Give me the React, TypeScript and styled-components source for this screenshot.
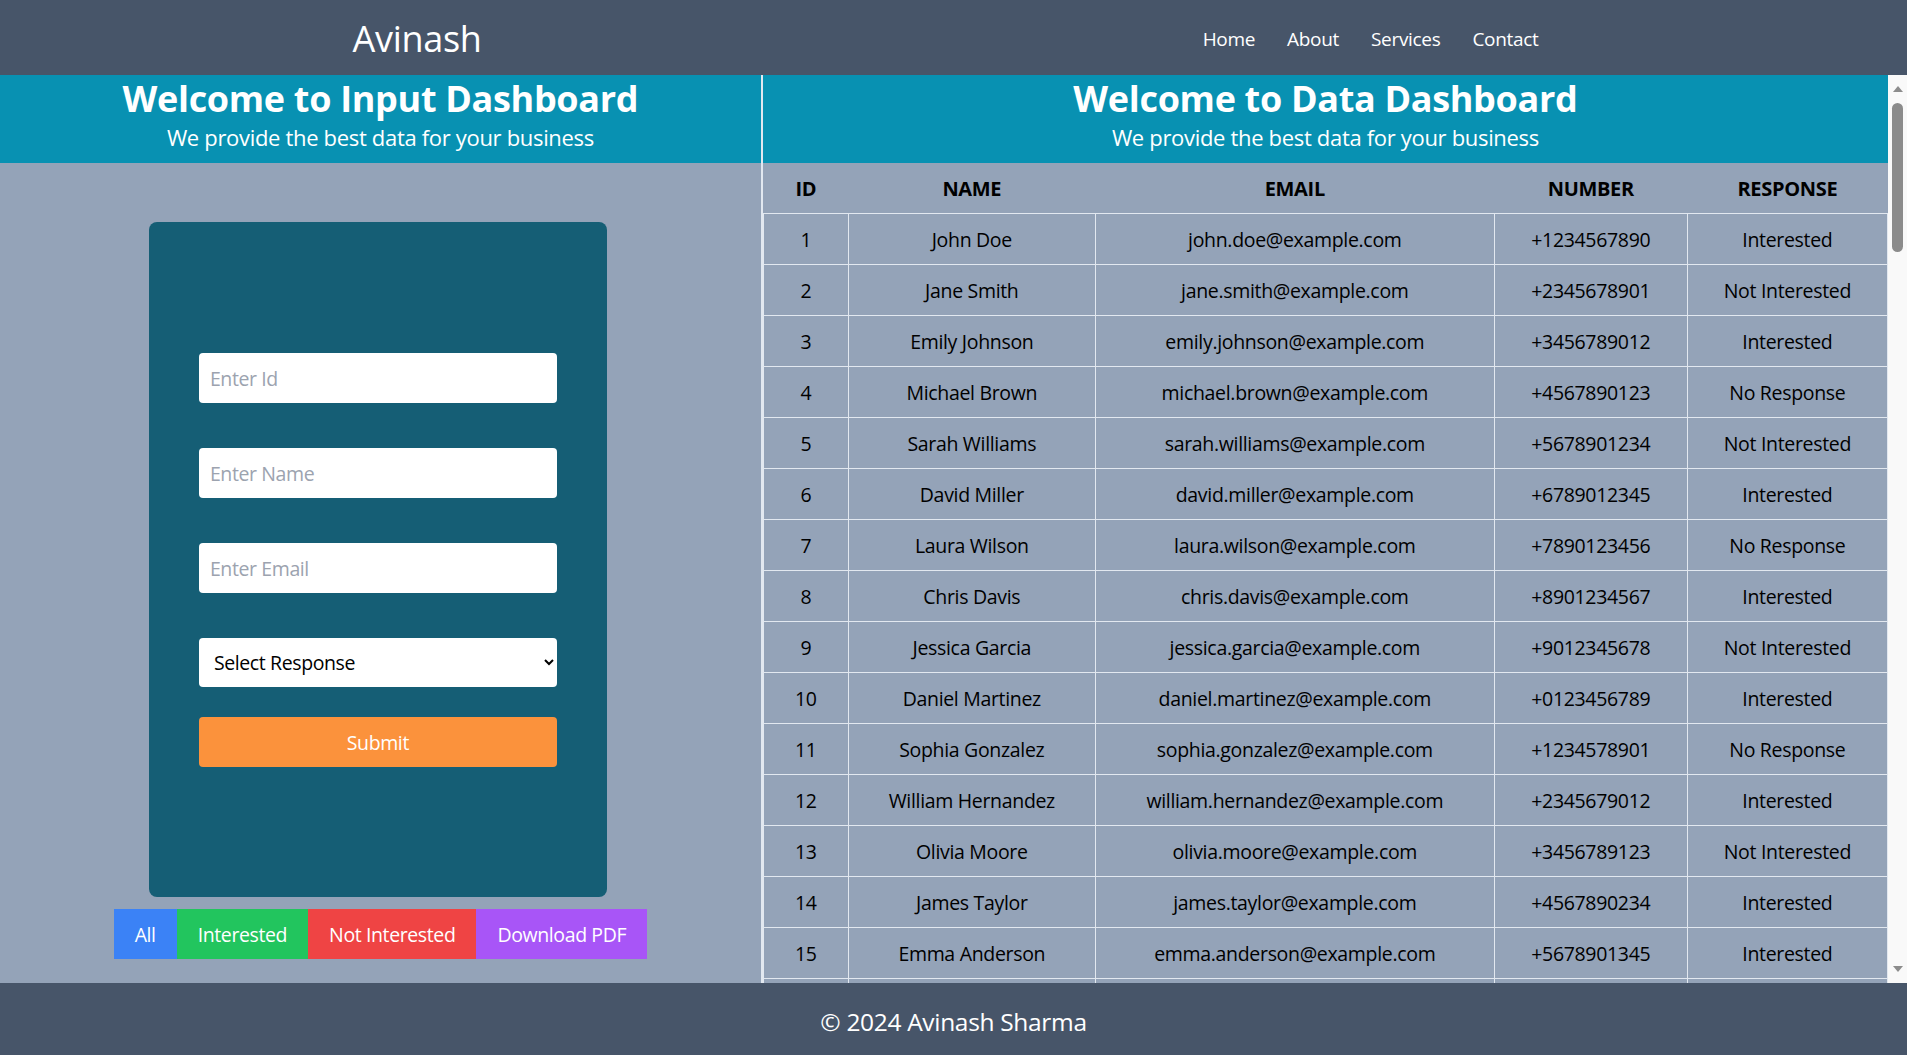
import React from "react";
import styled, { createGlobalStyle } from "styled-components";

const GlobalStyle = createGlobalStyle`
  *, *::before, *::after { box-sizing: border-box; }
  html, body { margin: 0; padding: 0; height: 100%; overflow: hidden; }
  body {
    font-family: "Open Sans", "Noto Sans", "Liberation Sans", sans-serif;
    letter-spacing: -0.02em;
  }
  #root { height: 100%; }
`;

const Page = styled.div`
  display: flex;
  flex-direction: column;
  height: 100vh;
`;

const TopBar = styled.header`
  flex: 0 0 75px;
  display: flex;
  align-items: center;
  justify-content: space-around;
  padding-top: 2px;
  background: #475569;
  color: #ffffff;
`;

const Brand = styled.div`
  font-size: 36px;
  line-height: 40px;
`;

const Nav = styled.nav`
  display: flex;
  align-items: center;
`;

const NavLink = styled.a`
  margin: 0 16px;
  font-size: 19px;
  line-height: 28px;
  color: #ffffff;
  text-decoration: none;
`;

const Main = styled.main`
  flex: 1;
  display: flex;
  min-height: 0;
`;

const LeftPanel = styled.section`
  flex: 0 0 40%;
  display: flex;
  flex-direction: column;
  background: #94a3b8;
  border-right: 2px solid #e2e8f0;
`;

const RightPanel = styled.section`
  flex: 1;
  min-width: 0;
  display: flex;
  background: #94a3b8;
`;

const ScrollArea = styled.div`
  flex: 1;
  min-width: 0;
  overflow-y: auto;
  scrollbar-width: none;

  &::-webkit-scrollbar {
    display: none;
  }
`;

const ScrollTrack = styled.div`
  flex: 0 0 19px;
  display: flex;
  flex-direction: column;
  align-items: center;
  padding: 11px 0 11px;
  background: #f9f9f9;
`;

const ArrowUp = styled.div`
  width: 0;
  height: 0;
  border-left: 5px solid transparent;
  border-right: 5px solid transparent;
  border-bottom: 6px solid #8c8c8c;
`;

const ArrowDown = styled.div`
  width: 0;
  height: 0;
  border-left: 5px solid transparent;
  border-right: 5px solid transparent;
  border-top: 6px solid #8c8c8c;
`;

const Thumb = styled.div`
  width: 11px;
  height: 149px;
  margin-top: 11px;
  border-radius: 6px;
  background: #8b8b8b;
`;

const TrackSpacer = styled.div`
  flex: 1;
`;

const Banner = styled.div`
  flex: 0 0 88px;
  height: 88px;
  display: flex;
  flex-direction: column;
  align-items: center;
  padding-top: 4px;
  background: #0891b2;
  color: #ffffff;
  text-align: center;
`;

const BannerTitle = styled.h1`
  margin: 0;
  font-size: 36px;
  line-height: 40px;
  font-weight: 700;
`;

const BannerSub = styled.p`
  margin: 4px 0 0;
  font-size: 22px;
  line-height: 28px;
`;

const LeftBody = styled.div`
  flex: 1;
  display: flex;
  flex-direction: column;
  align-items: center;
  padding-top: 59px;
`;

const FormCard = styled.form`
  width: 458px;
  height: 675px;
  display: flex;
  flex-direction: column;
  margin-right: 5px;
  padding: 131px 50px 0;
  background: #155e75;
  border-radius: 8px;
`;

const TextField = styled.input`
  height: 50px;
  margin-bottom: 45px;
  padding: 0 11px;
  border: none;
  border-radius: 4px;
  background: #ffffff;
  font-family: inherit;
  font-size: 19.5px;
  letter-spacing: -0.02em;
  color: #000;
  outline: none;

  &::placeholder {
    color: #9ca3af;
  }
`;

const ResponseSelect = styled.select`
  height: 49px;
  margin-bottom: 30px;
  padding: 0 8px 0 11px;
  border: none;
  border-radius: 4px;
  background: #ffffff;
  font-family: inherit;
  font-size: 19.5px;
  letter-spacing: -0.02em;
  color: #000;
  outline: none;
`;

const SubmitButton = styled.button`
  height: 50px;
  border: none;
  border-radius: 4px;
  background: #fb923c;
  color: #ffffff;
  font-family: inherit;
  font-size: 19.5px;
  letter-spacing: -0.02em;
  cursor: pointer;
`;

const FilterBar = styled.div`
  display: flex;
  margin-top: 12px;
`;

const FilterButton = styled.button<{ $bg: string }>`
  height: 50px;
  padding: 0 21px;
  border: none;
  border-radius: 0;
  background: ${(p) => p.$bg};
  color: #ffffff;
  font-family: inherit;
  font-size: 19.5px;
  letter-spacing: -0.02em;
  cursor: pointer;
`;

const DataTable = styled.table`
  width: 100%;
  border-collapse: collapse;
  table-layout: fixed;
  color: #000;
`;

const HeadCell = styled.th`
  height: 50px;
  padding: 2px 0 0;
  font-size: 20px;
  font-weight: 700;
  text-transform: uppercase;
  text-align: center;
  border-bottom: 1px solid #e2e8f0;
`;

const Cell = styled.td`
  height: 51px;
  padding: 1px 0 0;
  font-size: 19.5px;
  text-align: center;
  border: 1px solid #e2e8f0;
  white-space: nowrap;
`;

const Footer = styled.footer`
  flex: 0 0 72px;
  display: flex;
  align-items: center;
  justify-content: center;
  padding-top: 6px;
  background: #475569;
  color: #ffffff;
  font-size: 24.5px;
  line-height: 32px;
`;

type Row = { id: number; name: string; email: string; number: string; response: string };

const base: Row[] = [
  { id: 1, name: "John Doe", email: "john.doe@example.com", number: "+1234567890", response: "Interested" },
  { id: 2, name: "Jane Smith", email: "jane.smith@example.com", number: "+2345678901", response: "Not Interested" },
  { id: 3, name: "Emily Johnson", email: "emily.johnson@example.com", number: "+3456789012", response: "Interested" },
  { id: 4, name: "Michael Brown", email: "michael.brown@example.com", number: "+4567890123", response: "No Response" },
  { id: 5, name: "Sarah Williams", email: "sarah.williams@example.com", number: "+5678901234", response: "Not Interested" },
  { id: 6, name: "David Miller", email: "david.miller@example.com", number: "+6789012345", response: "Interested" },
  { id: 7, name: "Laura Wilson", email: "laura.wilson@example.com", number: "+7890123456", response: "No Response" },
  { id: 8, name: "Chris Davis", email: "chris.davis@example.com", number: "+8901234567", response: "Interested" },
  { id: 9, name: "Jessica Garcia", email: "jessica.garcia@example.com", number: "+9012345678", response: "Not Interested" },
  { id: 10, name: "Daniel Martinez", email: "daniel.martinez@example.com", number: "+0123456789", response: "Interested" },
  { id: 11, name: "Sophia Gonzalez", email: "sophia.gonzalez@example.com", number: "+1234578901", response: "No Response" },
  { id: 12, name: "William Hernandez", email: "william.hernandez@example.com", number: "+2345679012", response: "Interested" },
  { id: 13, name: "Olivia Moore", email: "olivia.moore@example.com", number: "+3456789123", response: "Not Interested" },
  { id: 14, name: "James Taylor", email: "james.taylor@example.com", number: "+4567890234", response: "Interested" },
  { id: 15, name: "Emma Anderson", email: "emma.anderson@example.com", number: "+5678901345", response: "Interested" },
];

const firsts = ["Liam", "Ava", "Noah", "Mia", "Ethan", "Isabella", "Lucas", "Amelia", "Mason", "Harper", "Logan", "Ella", "Jacob", "Grace", "Henry", "Chloe", "Owen", "Zoe"];
const lasts = ["Thomas", "Jackson", "White", "Harris", "Martin", "Thompson", "Lee", "Walker", "Hall", "Allen", "Young", "King", "Wright", "Scott", "Green", "Baker", "Adams"];
const responses = ["Interested", "Not Interested", "No Response"];

const rows: Row[] = [...base];
for (let i = 16; i <= 100; i++) {
  const f = firsts[i % firsts.length];
  const l = lasts[(i * 7) % lasts.length];
  const digits = String((i * 987654321) % 10000000000).padStart(10, "0");
  rows.push({
    id: i,
    name: `${f} ${l}`,
    email: `${f.toLowerCase()}.${l.toLowerCase()}@example.com`,
    number: `+${digits}`,
    response: responses[i % 3],
  });
}

const colWidths = [85, 247, 399, 193];

export default function App() {
  return (
    <Page>
      <GlobalStyle />
      <TopBar>
        <Brand>Avinash</Brand>
        <Nav>
          <NavLink href="#">Home</NavLink>
          <NavLink href="#">About</NavLink>
          <NavLink href="#">Services</NavLink>
          <NavLink href="#">Contact</NavLink>
        </Nav>
      </TopBar>
      <Main>
        <LeftPanel>
          <Banner>
            <BannerTitle>Welcome to Input Dashboard</BannerTitle>
            <BannerSub>We provide the best data for your business</BannerSub>
          </Banner>
          <LeftBody>
            <FormCard onSubmit={(e) => e.preventDefault()}>
              <TextField placeholder="Enter Id" />
              <TextField placeholder="Enter Name" />
              <TextField placeholder="Enter Email" />
              <ResponseSelect defaultValue="">
                <option value="">Select Response</option>
                <option value="Interested">Interested</option>
                <option value="Not Interested">Not Interested</option>
                <option value="No Response">No Response</option>
              </ResponseSelect>
              <SubmitButton type="submit">Submit</SubmitButton>
            </FormCard>
            <FilterBar>
              <FilterButton $bg="#3b82f6">All</FilterButton>
              <FilterButton $bg="#22c55e">Interested</FilterButton>
              <FilterButton $bg="#ef4444">Not Interested</FilterButton>
              <FilterButton $bg="#a855f7">Download PDF</FilterButton>
            </FilterBar>
          </LeftBody>
        </LeftPanel>
        <RightPanel>
          <ScrollArea>
            <Banner>
              <BannerTitle>Welcome to Data Dashboard</BannerTitle>
              <BannerSub>We provide the best data for your business</BannerSub>
            </Banner>
            <DataTable>
              <colgroup>
                {colWidths.map((w, i) => (
                  <col key={i} style={{ width: w }} />
                ))}
                <col />
              </colgroup>
              <thead>
                <tr>
                  <HeadCell>ID</HeadCell>
                  <HeadCell>Name</HeadCell>
                  <HeadCell>Email</HeadCell>
                  <HeadCell>Number</HeadCell>
                  <HeadCell>Response</HeadCell>
                </tr>
              </thead>
              <tbody>
                {rows.map((r) => (
                  <tr key={r.id}>
                    <Cell>{r.id}</Cell>
                    <Cell>{r.name}</Cell>
                    <Cell>{r.email}</Cell>
                    <Cell>{r.number}</Cell>
                    <Cell>{r.response}</Cell>
                  </tr>
                ))}
              </tbody>
            </DataTable>
          </ScrollArea>
          <ScrollTrack aria-hidden="true">
            <ArrowUp />
            <Thumb />
            <TrackSpacer />
            <ArrowDown />
          </ScrollTrack>
        </RightPanel>
      </Main>
      <Footer>© 2024 Avinash Sharma</Footer>
    </Page>
  );
}
